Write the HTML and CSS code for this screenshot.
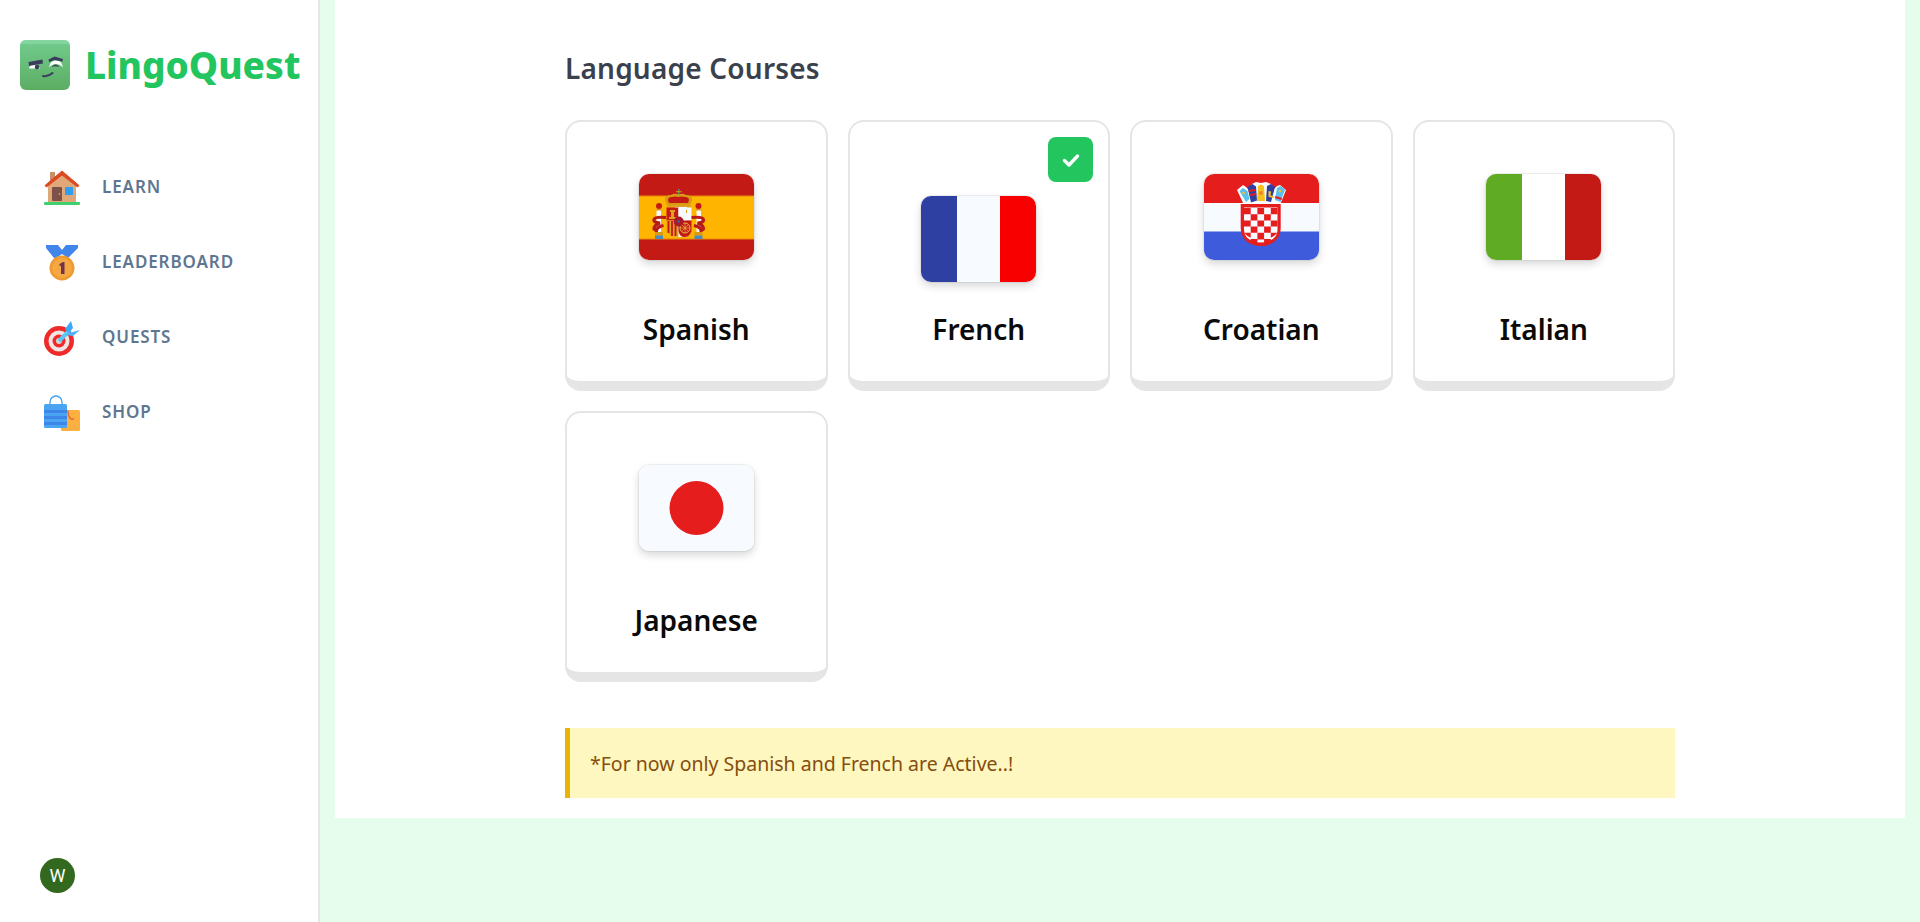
FILE: index.html
```html
<!DOCTYPE html>
<html lang="en">
<head>
<meta charset="utf-8">
<title>LingoQuest</title>
<link rel="stylesheet" href="styles.css">
</head>
<body>
<div class="app">
  <aside class="sidebar">
    <div class="brand">
      <svg class="brand-icon" viewBox="0 0 50 50">
        <defs><linearGradient id="lg" x1="0" y1="0" x2="0" y2="1"><stop offset="0" stop-color="#72cc8e"/><stop offset="1" stop-color="#5cad63"/></linearGradient></defs>
        <rect width="50" height="50" rx="6" fill="url(#lg)"/>
        <path d="M6 0h38a6 6 0 0 1 6 4H0a6 6 0 0 1 6-4z" fill="#8fdcaa" opacity=".6"/>
        <path d="M9 28.500q1-4.500 5-4.500t6 4.500z" fill="#fff"/>
        <path d="M8.500 22l14-2.500 .5 4-14 2.500z" fill="#3a3d5c"/>
        <circle cx="17" cy="27" r="2.300" fill="#3a3d5c"/>
        <path d="M29 27.500q1-7 7-7t7 7q-3-3.500-7-3.500t-7 3.500z" fill="#fff"/>
        <path d="M28.500 19.500l6-3 8.500 2.500-.5 2.500-8-1.500-5.500 2z" fill="#3a3d5c"/>
        <path d="M31.500 27q4-5 8 0q-4-1.500-8 0z" fill="#3a3d5c"/>
        <path d="M23 36q5 1 9.500-3" fill="none" stroke="#3a3d5c" stroke-width="2" stroke-linecap="round"/>
      </svg>
      <span class="brand-name">LingoQuest</span>
    </div>
    <nav class="nav">
      <a class="nav-item">
        <svg class="nav-icon" viewBox="0 0 36 36">
          <rect x="6" y="2" width="5" height="14" fill="#c99068"/>
          <path d="M4 15L18 4l14 11v19H4z" fill="#e0a878"/>
          <path d="M1 15.500L18 1l17 14.500-1.500 1.500L18 5 2.500 17z" fill="#dc4a22" stroke="#dc4a22" stroke-linejoin="round"/>
          <rect x="8" y="17" width="10" height="14" rx="1" fill="#7d5148"/>
          <circle cx="15.500" cy="24" r=".8" fill="#d9b9a0"/>
          <rect x="21" y="17" width="8" height="8" fill="#2f9df0"/>
          <rect x="0" y="32" width="36" height="3" rx="1" fill="#3ed06e"/>
        </svg>
        <span class="nav-label">LEARN</span>
      </a>
      <a class="nav-item">
        <svg class="nav-icon" viewBox="0 0 36 36">
          <path d="M2 0h12l4 5 4-5h12v3l-10 10H24l-6-4-6 4h-2L2 3z" fill="#4285ea"/>
          <circle cx="18" cy="23" r="12.500" fill="#ee9a32"/>
          <circle cx="18" cy="23" r="10" fill="#f5a742"/>
          <path d="M15.500 19l3.500-2h1.500v12h-3.500v-8.500l-1.500.8z" fill="#6d3350"/>
        </svg>
        <span class="nav-label">LEADERBOARD</span>
      </a>
      <a class="nav-item">
        <svg class="nav-icon" viewBox="0 0 36 36">
          <circle cx="15" cy="21" r="15" fill="#f02a2a"/>
          <circle cx="15" cy="21" r="10.500" fill="#f3e4e4"/>
          <circle cx="15" cy="21" r="6.500" fill="#f02a2a"/>
          <circle cx="15" cy="21" r="3" fill="#d9d2d2"/>
          <path d="M15 21l11-11" stroke="#58c8f5" stroke-width="4"/>
          <path d="M21 9l6-8 2 7-4 5z" fill="#3fa7f5"/>
          <path d="M25 13l11-3-7 6-7-1z" fill="#4db4f7"/>
        </svg>
        <span class="nav-label">QUESTS</span>
      </a>
      <a class="nav-item">
        <svg class="nav-icon" viewBox="0 0 36 36">
          <rect x="17" y="15" width="19" height="21" rx="1.500" fill="#fbb040"/>
          <path d="M24 15.500c0 8 4 10 6 8" fill="none" stroke="#e0603a" stroke-width="1.200"/>
          <path d="M6 11V7a6 6 0 0 1 12 0v4" fill="none" stroke="#3fa0ee" stroke-width="1.300"/>
          <rect x="0" y="9" width="23" height="24" rx="1.500" fill="#4aa4f2"/>
          <rect x="0" y="15" width="23" height="3" fill="#3b86e8"/>
          <rect x="0" y="21" width="23" height="3" fill="#3b86e8"/>
          <rect x="0" y="27" width="23" height="3" fill="#3b86e8"/>
        </svg>
        <span class="nav-label">SHOP</span>
      </a>
    </nav>
    <div class="avatar">W</div>
  </aside>

  <main class="main">
    <section class="panel">
      <div class="content">
        <h2 class="title">Language Courses</h2>
        <div class="grid">
          <div class="card">
            <div class="flag-area">
              <svg class="flag" viewBox="0 0 115 86">
                <rect width="115" height="86" fill="#c41a16"/>
                <rect y="22" width="115" height="43" fill="#ffb400"/>
                <rect y="21.500" width="115" height="1" fill="#e58a0a"/>
                <rect y="64.500" width="115" height="1" fill="#e58a0a"/>
                <path d="M39 15h1.500v6H39z" fill="#5a8a8a"/>
                <path d="M37 17h5.500v1.200H37z" fill="#d08a10"/>
                <path d="M26 26q0-5 6-5 3.500-2 7.500-.5 4-1.500 7.500.5 6 0 6 5l-2 5H28z" fill="#d89a10"/>
                <path d="M29 26q0-3 4-3 3-1 6.500 0 3.500-1 6.500 0 4 0 4 3l-1 3H30z" fill="#c41a16"/>
                <rect x="28" y="31" width="24" height="2.500" fill="#e0a020"/>
                <rect x="36" y="33" width="12" height="30" fill="#f7fbff"/>
                <rect x="27.500" y="33.500" width="12" height="13" fill="#c41a16"/>
                <path d="M31 36h5v2h-1v5h2v2h-7v-2h2v-5h-1z" fill="#e0a020"/>
                <rect x="39.500" y="33.500" width="13" height="13" fill="#f7fbff"/>
                <rect x="47" y="36" width="1" height="3" fill="#d89a10"/>
                <path d="M27.500 46.500h12V63q-8 0-12-6z" fill="#e0a020"/>
                <path d="M29.500 47v12M33 47v15M36.500 47v15" stroke="#c41a16" stroke-width="1.800"/>
                <path d="M39.500 46.500h13V57q-2 6-7 6t-6-6z" fill="#c41a16"/>
                <circle cx="46" cy="54" r="5" fill="none" stroke="#e9b040" stroke-width="1"/>
                <path d="M46 49v10M41 54h10M42.500 50.500l7 7M49.500 50.500l-7 7" stroke="#e9b040" stroke-width=".7"/>
                <circle cx="39.700" cy="47.500" r="5" fill="#a81a2a"/>
                <circle cx="39.700" cy="47.500" r="1.200" fill="#3a60b0"/>
                <rect x="17.500" y="35" width="4.500" height="24" fill="#f7fbff"/>
                <rect x="57.500" y="35" width="4.500" height="24" fill="#f7fbff"/>
                <circle cx="20" cy="32" r="3" fill="#c41a16"/>
                <circle cx="59.500" cy="32" r="3" fill="#c41a16"/>
                <rect x="17" y="35" width="5.500" height="1.500" fill="#d89a10"/>
                <rect x="57" y="35" width="5.500" height="1.500" fill="#d89a10"/>
                <path d="M27 43.500q-11-1-12 2-1 3 6 3.500-6 2-6 6l2.500 2q0-4 7-5.500" fill="none" stroke="#b81a18" stroke-width="3"/>
                <path d="M52.500 43.500q11-1 12 2 1 3-6 3.500 6 2 6 6l-2.500 2q0-4-7-5.500" fill="none" stroke="#b81a18" stroke-width="3"/>
                <rect x="16" y="58" width="8" height="3.500" fill="#d89a10"/>
                <rect x="16" y="61.500" width="8" height="3.500" fill="#4a8ac0"/>
                <rect x="55.500" y="58" width="8" height="3.500" fill="#d89a10"/>
                <rect x="55.500" y="61.500" width="8" height="3.500" fill="#4a8ac0"/>
              </svg>
            </div>
            <div class="name">Spanish</div>
          </div>

          <div class="card card-selected">
            <div class="check">
              <svg viewBox="0 0 20 20" class="check-icon"><path d="M3.500 10.500l4.500 4.500 8.500-9" fill="none" stroke="#fff" stroke-width="3.400" stroke-linecap="round" stroke-linejoin="round"/></svg>
            </div>
            <div class="flag-area">
              <svg class="flag" viewBox="0 0 115 86">
                <rect width="36" height="86" fill="#2e41a3"/>
                <rect x="36" width="43" height="86" fill="#f7fbff"/>
                <rect x="79" width="36" height="86" fill="#f90000"/>
              </svg>
            </div>
            <div class="name">French</div>
          </div>

          <div class="card">
            <div class="flag-area">
              <svg class="flag" viewBox="0 0 115 86">
                <rect width="115" height="29" fill="#e51d1d"/>
                <rect y="29" width="115" height="29" fill="#f7fbff"/>
                <rect y="57.500" width="115" height="28.500" fill="#3d5bdb"/>
                <path d="M39 11l3 2 3 3 3-6 4-2 5 1 5-1 5 2 3 5 3-3 3-1 6 5-6 15H40L33 16z" fill="#f7fbff"/>
                <path d="M35.500 17l3.500-3 4.500 3 2 8-3.500 3z" fill="#5ac0ee"/>
                <circle cx="39.500" cy="19" r="1.300" fill="#f6c11e"/>
                <path d="M43.500 13l5-3 3.500 2.500 1 14-6 2z" fill="#2f3f9f"/>
                <path d="M44.500 16l7-1 .3 2-7 1zM45.500 20l6.500-1 .3 2-6.500 1z" fill="#e51d1d"/>
                <path d="M54 12l3-1.500 3 1.500 1 15h-8z" fill="#f6c11e"/>
                <circle cx="57" cy="19" r="2" fill="#e9892a"/>
                <path d="M63 12l4-2 4 3-4 15-5-1z" fill="#2f3f9f"/>
                <path d="M64.500 17l2.500.5-.5 4 3.500.8-.5 1.700-5-1.200z" fill="#f6c11e"/>
                <path d="M73 14l3.500-2 4.500 3.500-4.500 12.500-5.500-2z" fill="#5ac0ee"/>
                <circle cx="76" cy="17" r="1.300" fill="#f6c11e"/>
                <path d="M71.500 22l6.500 2-.7 2-6.500-2z" fill="#e51d1d"/>
                <path d="M36.700 30h40v24c0 11-9 18-20 18s-20-7-20-18z" fill="#e51d1d"/>
                <path d="M40 33.500h33.500v22c0 8-7 13-16.750 13S40 63.500 40 55.500z" fill="#f7fbff"/>
                <path d="M40 34h6.700v6.200H40zM53.400 34h6.700v6.200h-6.700zM66.800 34h6.700v6.200h-6.700zM46.700 40.200h6.700v6.200h-6.700zM60.100 40.200h6.700v6.200h-6.700zM40 46.400h6.700v6.200H40zM53.400 46.400h6.700v6.200h-6.700zM66.800 46.400h6.700v6.200h-6.700zM46.700 52.600h6.700v6.200h-6.700zM60.100 52.600h6.700v6.200h-6.700zM40 58.800h6.700v5q-4-2-6.700-5zM53.400 58.800h6.700v6.700h-6.700zM66.800 58.800h6.700q-2.700 3-6.700 5zM46.700 65h6.700v4q-4 0-6.700-1.500zM60.100 65h6.700v2.500q-2.700 1.500-6.700 1.500z" fill="#e51d1d"/>
              </svg>
            </div>
            <div class="name">Croatian</div>
          </div>

          <div class="card">
            <div class="flag-area">
              <svg class="flag" viewBox="0 0 115 86">
                <rect width="36" height="86" fill="#5fab24"/>
                <rect x="36" width="43" height="86" fill="#fff"/>
                <rect x="79" width="36" height="86" fill="#c41a16"/>
              </svg>
            </div>
            <div class="name">Italian</div>
          </div>

          <div class="card">
            <div class="flag-area">
              <svg class="flag" viewBox="0 0 115 86">
                <rect width="115" height="86" fill="#f7fbff"/>
                <circle cx="57.500" cy="43" r="27" fill="#e51d1d"/>
              </svg>
            </div>
            <div class="name">Japanese</div>
          </div>
        </div>
        <div class="notice">*For now only Spanish and French are Active..!</div>
      </div>
    </section>
  </main>
</div>
</body>
</html>
```

FILE: styles.css
```css
* { box-sizing: border-box; }
html, body { margin: 0; padding: 0; height: 100%; overflow: hidden; }
body { font-family: "Noto Sans", "Lato", sans-serif; background: #e6fcec; }

.app { display: flex; height: 922px; }

.sidebar {
  width: 320px;
  flex: none;
  display: flex;
  flex-direction: column;
  background: #fff;
  border-right: 2px solid #e5e5e5;
}
.brand { display: flex; align-items: center; gap: 15px; padding: 40px 0 0 20px; }
.brand-icon { width: 50px; height: 50px; display: block; flex: none; }
.brand-name { font-size: 37px; line-height: 50px; font-weight: 800; color: #22c55e; }

.nav { display: flex; flex-direction: column; margin-top: 60px; padding-left: 44px; }
.nav-item { display: flex; align-items: center; gap: 22px; height: 75px; color: #5f7690; font-size: 17px; font-weight: 600; letter-spacing: .9px; }
.nav-icon { width: 36px; height: 36px; display: block; flex: none; }
.nav-label { margin-bottom: 2px; }

.avatar {
  width: 35px;
  height: 35px;
  margin: auto 0 29px 40px;
  border-radius: 50%;
  background: #33691e;
  color: #fff;
  font-family: "Roboto", sans-serif;
  font-size: 18px;
  line-height: 35px;
  text-align: center;
}

.main { flex: 1; padding: 0 15px; }
.panel { background: #fff; padding: 49px 0 20px; }
.content { width: 1110px; margin: 0 auto; }
.title { margin: 0 0 31px; height: 40px; font-size: 28px; line-height: 38px; font-weight: 600; color: #3b414c; letter-spacing: .2px; }

.grid { display: grid; grid-template-columns: repeat(4, 1fr); gap: 20px; }
.card {
  position: relative;
  height: 271px;
  padding-top: 52px;
  display: flex;
  flex-direction: column;
  align-items: center;
  background: #fff;
  border: 2px solid #e5e5e5;
  border-bottom-width: 10px;
  border-radius: 16px;
}
.flag-area { height: 108px; display: flex; align-items: flex-start; }
.card-selected .flag-area { align-items: flex-end; }
.flag {
  width: 115px;
  height: 86px;
  display: block;
  border-radius: 10px;
  box-shadow: 0 0 0 1px rgba(0, 0, 0, .05), 0 4px 8px rgba(0, 0, 0, .16);
}
.name { margin-top: 29px; font-size: 28px; line-height: 36px; font-weight: 600; color: #0a0a0a; }

.check {
  position: absolute;
  top: 15px;
  right: 15px;
  width: 45px;
  height: 45px;
  display: flex;
  align-items: center;
  justify-content: center;
  background: #22c55e;
  border-radius: 8px;
}
.check-icon { width: 20px; height: 20px; display: block; }

.notice {
  margin-top: 46px;
  height: 70px;
  padding-left: 20px;
  display: flex;
  align-items: center;
  background: #fef7c0;
  border-left: 5px solid #eab308;
  color: #854d0e;
  font-size: 19.500px;
}
```
